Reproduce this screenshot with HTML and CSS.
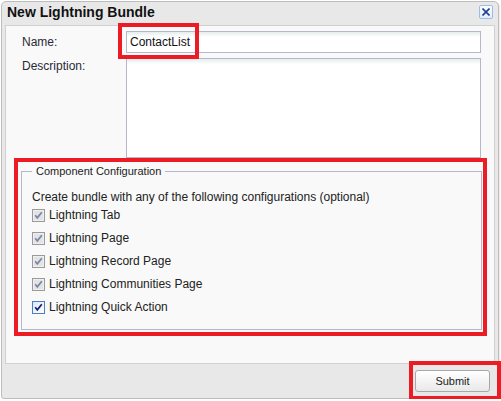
FILE: index.html
```html
<!DOCTYPE html>
<html>
<head>
<meta charset="utf-8">
<link rel="stylesheet" href="styles.css">
</head>
<body>
<div class="dialog">
  <div class="titlebar">
    <span class="title">New Lightning Bundle</span>
    <button class="close" aria-label="Close">
      <svg width="8" height="8" viewBox="0 0 8 8"><path d="M0.5 0.5 L7.5 7.5 M7.5 0.5 L0.5 7.5" stroke="#1d3f8f" stroke-width="1.6" fill="none"/></svg>
    </button>
  </div>
  <div class="panel">
    <div class="form-row">
      <label class="lbl lbl-mid">Name:</label>
      <div class="field-wrap">
        <input class="text-in" type="text" value="ContactList">
        <span class="hl hl-name"></span>
      </div>
    </div>
    <div class="form-row row-desc">
      <label class="lbl lbl-top">Description:</label>
      <textarea class="text-area"></textarea>
    </div>
    <div class="hl-box">
      <fieldset class="fs">
        <legend class="fs-legend">Component Configuration</legend>
        <div class="fs-intro">Create bundle with any of the following configurations (optional)</div>
        <div class="cb-row">
          <span class="cb cb-dis"><svg width="13" height="13" viewBox="0 0 13 13"><rect x="0.5" y="0.5" width="12" height="12" fill="#e3e3e3" stroke="#9a9a9a"/><rect x="1.5" y="1.5" width="10" height="10" fill="none" stroke="#efefef"/><path d="M3.2 6.3 L5.3 8.8 L9.8 3.3" fill="none" stroke="#7686ac" stroke-width="1.7"/></svg></span>
          <span class="cb-label">Lightning Tab</span>
        </div>
        <div class="cb-row">
          <span class="cb cb-dis"><svg width="13" height="13" viewBox="0 0 13 13"><rect x="0.5" y="0.5" width="12" height="12" fill="#e3e3e3" stroke="#9a9a9a"/><rect x="1.5" y="1.5" width="10" height="10" fill="none" stroke="#efefef"/><path d="M3.2 6.3 L5.3 8.8 L9.8 3.3" fill="none" stroke="#7686ac" stroke-width="1.7"/></svg></span>
          <span class="cb-label">Lightning Page</span>
        </div>
        <div class="cb-row">
          <span class="cb cb-dis"><svg width="13" height="13" viewBox="0 0 13 13"><rect x="0.5" y="0.5" width="12" height="12" fill="#e3e3e3" stroke="#9a9a9a"/><rect x="1.5" y="1.5" width="10" height="10" fill="none" stroke="#efefef"/><path d="M3.2 6.3 L5.3 8.8 L9.8 3.3" fill="none" stroke="#7686ac" stroke-width="1.7"/></svg></span>
          <span class="cb-label">Lightning Record Page</span>
        </div>
        <div class="cb-row">
          <span class="cb cb-dis"><svg width="13" height="13" viewBox="0 0 13 13"><rect x="0.5" y="0.5" width="12" height="12" fill="#e3e3e3" stroke="#9a9a9a"/><rect x="1.5" y="1.5" width="10" height="10" fill="none" stroke="#efefef"/><path d="M3.2 6.3 L5.3 8.8 L9.8 3.3" fill="none" stroke="#7686ac" stroke-width="1.7"/></svg></span>
          <span class="cb-label">Lightning Communities Page</span>
        </div>
        <div class="cb-row">
          <span class="cb"><svg width="13" height="13" viewBox="0 0 13 13"><defs><linearGradient id="cbg" x1="0" y1="0" x2="1" y2="1"><stop offset="0" stop-color="#dbe6f4"/><stop offset="1" stop-color="#ffffff"/></linearGradient></defs><rect x="0.5" y="0.5" width="12" height="12" fill="url(#cbg)" stroke="#4a7fc4"/><path d="M3.2 6.3 L5.3 8.8 L9.8 3.3" fill="none" stroke="#14206e" stroke-width="1.7"/></svg></span>
          <span class="cb-label">Lightning Quick Action</span>
        </div>
      </fieldset>
    </div>
  </div>
  <div class="footer">
    <div class="btn-wrap">
      <button class="btn">Submit</button>
      <span class="hl hl-submit"></span>
    </div>
  </div>
</div>
</body>
</html>
```

FILE: styles.css
```css
* { box-sizing: border-box; }
html, body { margin: 0; padding: 0; background: #ffffff; overflow: hidden; }
body { font-family: "Liberation Sans", Arial, sans-serif; font-size: 12px; color: #222; }

.dialog {
  margin: 1px 0 0 1px;
  width: 498px;
  height: 398px;
  border: 1px solid #bdbdbd;
  border-radius: 5px 5px 3px 3px;
  background: #e8e8e8;
  padding: 0 3px;
  display: flex;
  flex-direction: column;
  box-shadow: 1px 1px 1px rgba(0,0,0,0.08);
}

.titlebar {
  height: 23px;
  display: flex;
  align-items: flex-start;
  justify-content: space-between;
  padding: 0 2px 0 2px;
}
.title {
  font-weight: bold;
  font-size: 14px;
  line-height: 21px;
  color: #111;
}
.close {
  margin-top: 3px;
  width: 14px;
  height: 14px;
  padding: 0;
  border: 1px solid #9cbce6;
  border-radius: 2px;
  background: linear-gradient(#fbfdff, #e2ecf9);
  display: flex;
  align-items: center;
  justify-content: center;
}
.close svg { display: block; }

.panel {
  height: 339px;
  border: 1px solid #d0d0d0;
  background: #f9f9f9;
  padding-top: 5px;
}

.form-row {
  display: flex;
  padding: 0 13px 0 16px;
}
.row-desc { margin-top: 5px; }
.lbl {
  width: 104px;
  flex: none;
  color: #2a2a36;
}
.lbl-mid { line-height: 22px; }
.lbl-top { line-height: 15px; padding-top: 1px; }

.field-wrap { position: relative; width: 355px; }
.text-in {
  display: block;
  width: 355px;
  height: 22px;
  border: 1px solid #b5b8c8;
  background: linear-gradient(#e6ecec 0, #ffffff 5px);
  padding: 0 3px;
  font: 12px "Liberation Sans", Arial, sans-serif;
  color: #111;
  outline: none;
}
.text-area {
  display: block;
  width: 355px;
  height: 100px;
  border: 1px solid #b5b8c8;
  background: linear-gradient(#e6ecec 0, #ffffff 5px);
  resize: none;
  margin: 0;
  padding: 2px 3px;
  font: 12px "Liberation Sans", Arial, sans-serif;
}

.hl {
  position: absolute;
  border: 4px solid #ed1c24;
  pointer-events: none;
}
.hl-name { left: -8px; top: -8px; width: 81px; height: 36px; }

.hl-box {
  margin: 0 7px 0 8px;
  border: 4px solid #ed1c24;
  padding: 3px 1px 2px 3px;
}
.fs {
  margin: 0;
  border: 1px solid #b5b8c8;
  padding: 12px 10px 10px 10px;
  min-width: 0;
}
.fs-legend {
  padding: 0 4px;
  font-size: 11px;
  line-height: 13px;
  color: #222;
}
.fs-intro { line-height: 14px; color: #222; }
.cb-row {
  height: 23px;
  display: flex;
  align-items: center;
}
.cb { width: 13px; height: 13px; flex: none; margin-right: 4px; }
.cb svg { display: block; }
.cb-label { color: #222; line-height: 15px; }

.footer {
  flex: 1;
  display: flex;
  justify-content: flex-end;
  align-items: flex-start;
  padding: 6px 5px 0 0;
}
.btn-wrap { position: relative; }
.btn {
  display: block;
  width: 75px;
  height: 22px;
  border: 1px solid #a8a8a8;
  border-radius: 3px;
  background: linear-gradient(#ffffff, #e9e9e9);
  font: 11px "Liberation Sans", Arial, sans-serif;
  color: #222;
  padding: 0;
}
.hl-submit { left: -6px; top: -9px; width: 92px; height: 39px; }
```
